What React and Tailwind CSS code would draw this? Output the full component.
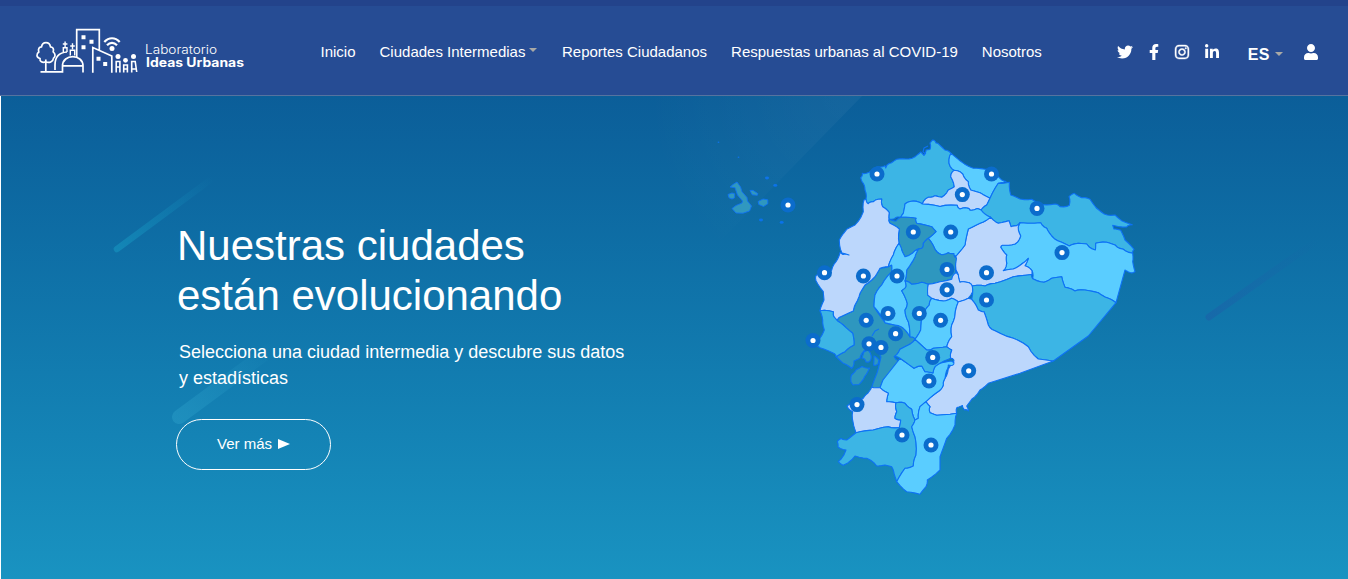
import React from "react";
import { FaTwitter, FaFacebookF, FaInstagram, FaLinkedinIn, FaUser } from "react-icons/fa";

const LIGHT = "#bcd7fc";
const SKY = "#5acdff";
const MID = "#3cb5e5";
const DARK = "#2e97bf";

const PROVINCES = [
  { name: "Guayas", fill: DARK, pts: "891.7,265 880,268.3 875,276.7 865,285 860,293.3 855,305 853.3,311 840.7,316.7 837.3,320.7 843.3,325 852.7,333.3 854,345 845,351.7 836,356.7 843.3,363.3 851.7,368.3 854,361 860,358.3 863,352 868,346 874,344 878,351 881,357 877,373 871.7,387.3 880,387.7 883,380 900,361 894.3,356.7 900,349.3 908.3,345 915,339.3 910,336.7 903.3,328.3 895,325 885,322.7 874,306.7 875,295 881.7,285 891.7,271.7" },
  { name: "Esmeraldas", fill: MID, pts: "860.7,177.7 862.3,173.3 869.3,172.3 877,167 885,165.7 885.7,168 887,165 891,163 896.7,159.3 906,159 915,156.7 920.7,152 924,155.5 926,150 929.8,149.5 930,143 932.7,140 936,143 940,145.3 945,150 951,153.3 949,163.3 954,170.3 950.7,176.7 954.3,186.7 948.3,190 941.7,197.3 935,195.7 928.3,197.3 922.3,204 913.3,201 905,204 903.3,213.3 901,217.3 896,217.5 889,219.3 889.3,212.7 882.7,206.7 881.7,199 873.3,201.7 868.3,203.7 866,199.3 865,190 863.3,183.3" },
  { name: "Carchi", fill: SKY, pts: "951,153.3 960,160.7 973.3,168.3 985,169.3 991,170 1000,178.3 1006,181.6 998.3,183.3 990,198.3 980,192.7 970.7,190 968.3,181.7 962.7,174 954,170.3 949,163.3" },
  { name: "Imbabura", fill: LIGHT, pts: "954,170.3 962.7,174 968.3,181.7 970.7,190 980,192.7 990,198.3 986.7,205 981,210 976.7,208.7 970,210.3 966.7,208 960,209 957.3,205.3 940,206.5 922.3,204 928.3,197.3 935,195.7 941.7,197.3 948.3,190 954.3,186.7 950.7,176.7" },
  { name: "Sucumbios", fill: MID, pts: "981,210 986.7,205 990,198.3 998.3,183.3 1009.3,182.3 1010.7,195 1020,199 1031.7,199.3 1043.3,204.7 1055,204 1060,206.7 1069.3,205.3 1069,196.7 1074.3,193.3 1081.7,197.7 1090,199.3 1096.7,208.3 1104.3,214 1115,215 1121.7,220.7 1132.3,224.7 1126.7,227 1112.7,225.3 1114,229 1120.7,230.3 1125,240 1134,249.3 1132.7,253.3 1123.3,249.3 1115,245 1106.7,242.3 1095.7,243.3 1095.3,250 1086.7,244 1078.3,243.3 1069.3,246 1061.7,242.3 1051.7,236 1046.7,228.3 1040.7,222.7 1020,222.7 1016.7,225.7 1011,226.7 1009,220.7 998.3,223.3 990.7,217.3 988,216" },
  { name: "Orellana", fill: SKY, pts: "1020,222.7 1040.7,222.7 1046.7,228.3 1051.7,236 1061.7,242.3 1069.3,246 1078.3,243.3 1086.7,244 1095.3,250 1095.7,243.3 1106.7,242.3 1115,245 1123.3,249.3 1132.7,253.3 1132.7,261.7 1135,271.7 1130,272.5 1125,270 1116,302.7 1108.3,298.3 1098.3,292.7 1085,290 1075,291 1065,287.3 1061.7,276.7 1051.7,278.3 1044,282.3 1032.7,278.7 1032,270.7 1025,265.7 1028.3,258.3 1022.7,263.3 1013.3,269 1003.3,270.7 1006.7,263.3 1006.7,255 1000.7,247.3 1004.3,245.3 1015,244 1020.7,236 1018.3,228.3" },
  { name: "Napo", fill: LIGHT, pts: "990.7,217.3 998.3,223.3 1009,220.7 1011,226.7 1016.7,225.7 1020,222.7 1018.3,228.3 1020.7,236 1015,244 1004.3,245.3 1000.7,247.3 1006.7,255 1006.7,263.3 1003.3,270.7 1013.3,269 1022.7,263.3 1028.3,258.3 1025,265.7 1032,270.7 1032,274.5 1013.3,276.7 995,283.3 985,286 972.3,286 966.7,282.3 960,282.3 958.3,275 956,270 956,256 965,245 968.3,229 980,223.3" },
  { name: "Pichincha", fill: SKY, pts: "905,204 913.3,201 922.3,204 940,206.5 957.3,205.3 960,209 966.7,208 970,210.3 976.7,208.7 981,210 988,216 990.7,217.3 980,223.3 968.3,229 965,245 956,256 948.3,252.7 941.7,254.7 935,249.3 928.3,238.3 936,231.7 931.7,226.7 916.7,223.3 916,218.3 901,217.3 903.3,213.3" },
  { name: "Santo Domingo", fill: DARK, pts: "901,217.3 916,218.3 916.7,223.3 931.7,226.7 936,231.7 928.3,238.3 923.3,243.3 921.7,248.3 915,250.7 905,256.7 901.7,250 899,243.3 899.3,229 890,223.3 889,219.3 896,221" },
  { name: "Cotopaxi", fill: DARK, pts: "928.3,238.3 935,249.3 941.7,254.7 948.3,252.7 954,253.5 956.5,258 956,275 951.7,279.3 940,281.7 928.3,284.3 921.7,282.3 911.7,284.3 905,280.7 906.7,270 915,256.7 918.3,249.3 921.7,248.3 923.3,243.3" },
  { name: "Manabi", fill: LIGHT, pts: "864,200 866,199.3 868.3,203.7 873.3,201.7 881.7,199 882.7,206.7 889.3,212.7 889,219.3 890,223.3 899.3,229 899,243.3 893.3,255 888.3,266.7 880,268.3 875,276.7 865,285 860,293.3 855,305 853.3,311 840.7,316.7 837.3,320.7 835,318 833.3,311.7 820,310.7 824,300 823.3,291.7 816,280.7 816.7,275 831.7,270 836,261.7 840,252.5 843,254.5 849,255 842,253 839.3,240 846.7,229.3 855,225 863.3,211.7" },
  { name: "Los Rios", fill: SKY, pts: "899,243.3 901.7,250 905,256.7 915,250.7 918.3,249.3 915,256.7 906.7,270 905,280.7 906,286.7 901.7,290.7 907.3,303.3 905,310 908.3,321.7 910,336.7 903.3,328.3 895,325 885,322.7 879.3,313.3 874,306.7 875,295 881.7,285 891.7,271.7 891.7,265 888.3,266.7 893.3,255" },
  { name: "Santa Elena", fill: MID, pts: "820,310.7 833.3,311.7 835,318 837.3,320.7 843.3,325 852.7,333.3 854,345 845,351.7 836,356.7 833,353 820,347.7 811,340 820,338 824.3,330 822.7,320" },
  { name: "Bolivar", fill: MID, pts: "905,280.7 911.7,284.3 921.7,282.3 928.3,284.3 927.7,295 931.7,298.3 929.3,305 921.7,316.7 920.7,330 915,339.3 910,336.7 908.3,321.7 905,310 907.3,303.3 901.7,290.7 906,286.7" },
  { name: "Tungurahua", fill: LIGHT, pts: "956,272.5 958.3,275 960,282.3 966.7,282.3 972.3,286 972.7,291.7 968.3,298.3 958.3,301.7 951.7,298.3 943.3,301 931.7,298.3 927.7,295 928.3,284.3 940,281.7 951.7,279.3" },
  { name: "Chimborazo", fill: SKY, pts: "931.7,298.3 943.3,301 951.7,298.3 958.3,301.7 955,315 951.7,325 951.7,336.7 946.7,346.7 933.3,348.3 926.7,350 915,339.3 920.7,330 921.7,316.7 929.3,305" },
  { name: "Pastaza", fill: MID, pts: "972.3,286 985,286 995,283.3 1013.3,276.7 1032,274.5 1032.7,278.7 1044,282.3 1051.7,278.3 1061.7,276.7 1065,287.3 1075,291 1085,290 1098.3,292.7 1108.3,298.3 1116,302.7 1088.3,336 1053.3,361 1038.3,359 1028.3,346.7 1013.3,338.3 995,330.7 988.3,325 984,311.7 978.3,310 971.7,299.3" },
  { name: "Morona Santiago", fill: LIGHT, pts: "958.3,301.7 968.3,298.3 971.7,299.3 978.3,310 984,311.7 988.3,325 995,330.7 1013.3,338.3 1028.3,346.7 1038.3,359 1053.3,361 1020,373.3 988.3,383.3 980,390 971.7,399.3 966.7,406 968.5,411 964.5,410 962.5,405.5 957,407.5 956.7,413.3 936.7,415.3 930,412.7 930,406.7 926,401.7 939,391 943.3,385 945,378.3 948.3,369 951,364 954,361 950.7,358.3 951.7,350 946.7,346.7 951.7,336.7 951.7,325 955,315" },
  { name: "Azuay", fill: SKY, pts: "900,358.3 914,368.3 921.7,366 925,371.7 933,373 935,366.7 940,363.3 948,361.5 951.5,361 954,362.7 951,365.5 948.3,365 946.5,371 945,378.3 943.3,385 939,391 926,401.7 920,406.7 918.3,418.3 915,420 911.7,409.3 905,403.3 896,402.7 886.7,401.7 888.3,393.3 880,387.7 883,380" },
  { name: "Canar", fill: MID, pts: "915,339.3 926.7,350 933.3,348.3 946.7,346.7 951.7,350 950.7,358.3 940,363.3 935,366.7 933,373 925,371.7 921.7,366 914,368.3 900,358.3 894.3,356.7 900,349.3 908.3,345" },
  { name: "El Oro", fill: LIGHT, pts: "871.7,387.3 880,387.7 888.3,393.3 886.7,401.7 896,402.7 896.7,411.7 895,418.3 900.7,420 899.3,427.7 888.3,426.7 873.3,430 856,432.7 853.3,423.3 852.7,411.7 847,406 856,401 863.3,398.3 868,393" },
  { name: "Loja", fill: MID, pts: "896,402.7 905,403.3 911.7,409.3 915,420 911.7,426.7 915,436.7 916,455 913.3,466 905,468.3 896.7,481.7 894,473.3 891.7,466.7 885,465 876.7,466 866.7,458.3 855,456 843.3,465.3 838.3,461.7 846,450 838,447 837.3,442 841,438.5 846.7,440 856,432.7 873.3,430 888.3,426.7 899.3,427.7 900.7,420 895,418.3 896.7,411.7" },
  { name: "Zamora", fill: SKY, pts: "926,401.7 930,406.7 930,412.7 936.7,415.3 956.7,413.3 955,425 946.7,438.3 940,456.7 940,470 927.3,480 926,486.7 920,494.3 906.7,491.7 896.7,481.7 905,468.3 913.3,466 916,455 915,436.7 911.7,426.7 915,420 918.3,418.3 920,406.7" },
  { name: "Puna", fill: DARK, pts: "851.5,375 856,370 862,366.5 869.5,368 865,376 859,384.5 853,385 851,382" },
  { name: "Delta norte", fill: DARK, pts: "864,352 868,350 871,355 870,361 866,362 862,358" },
  { name: "Delta sur", fill: DARK, pts: "874,356 879,360 878,364 873.5,365" },
];

const GALAPAGOS = [
  "730,187 733,184.5 737,182 740.5,187 742,191.7 747,197.5 747.5,201 751.5,206 749.5,211 743,213.2 736,213 732,208.5 736,205.5 742,203 742.5,201 737.5,195 735,187.7",
  "728,194.5 732,193 734.6,193.7 734.6,197.8 732,199 729,197.8",
  "750,190.4 753,190.4 757.8,193.6 757.3,195.3 752.2,194.8",
  "758.2,201.5 763,199 767.8,199.8 767.8,203.8 763.5,206.5 758.700,204.4",
];

const ISLETS = [
  [718.5, 142.3], [738.5, 157.3], [767, 178], [775.3, 185.4], [761, 220], [781.7, 222.4],
];

const MARKERS = [
  [877, 174], [991.5, 174], [962.3, 194.6], [1037, 208.4], [788, 205], [913.3, 232], [950.7, 232],
  [1062, 252.6], [824.5, 272.7], [863.4, 276], [897, 276], [947, 269.4], [986.5, 272.7], [947, 289.8],
  [986.5, 300], [888, 313.4], [919.3, 313.4], [866.2, 320.3], [940.6, 320.3], [895.6, 333.7],
  [813, 340.5], [869, 343.8], [881, 347.4], [932.7, 357.4], [968.7, 370.8], [929, 381],
  [857, 404.6], [902, 435], [931, 445],
];

// Bends every edge a little; the bend depends only on the edge, so neighbours stay joined.
function rugged(pts) {
  const p = pts.split(" ").map((s) => s.split(",").map(Number));
  let d = `M${p[0][0]} ${p[0][1]}`;
  p.forEach((a, i) => {
    const b = p[(i + 1) % p.length];
    const len = Math.hypot(b[0] - a[0], b[1] - a[1]);
    if (len > 4 && len < 22) {
      [0.33, 0.67].forEach((t) => {
        const x = a[0] + (b[0] - a[0]) * t;
        const y = a[1] + (b[1] - a[1]) * t;
        const h = Math.sin((a[0] + b[0]) * 12.9 + (a[1] + b[1]) * 7.3);
        const g = Math.cos((a[0] + b[0]) * 5.1 + (a[1] + b[1]) * 3.7);
        d += `L${(x + h * 0.7).toFixed(1)} ${(y + g * 0.7).toFixed(1)}`;
      });
    }
    d += `L${b[0]} ${b[1]}`;
  });
  return d + "Z";
}

function EcuadorMap() {
  return (
    <svg className="block h-[483px] w-[460px] shrink-0" viewBox="700 96 460 483">
      <g stroke="#0d72f6" strokeWidth="1.1" strokeLinejoin="round">
        {PROVINCES.map((p) => (
          <path key={p.name} d={rugged(p.pts)} fill={p.fill} />
        ))}
        {GALAPAGOS.map((pts) => (
          <polygon key={pts} points={pts} fill={DARK} strokeWidth="0.9" />
        ))}
        <path d="M928 146l-4 2-1 4 3 2M872 336l3-5 4-2M871 337l-1 5" fill="none" />
      </g>
      {ISLETS.map(([x, y], i) => (
        <ellipse key={i} cx={x} cy={y} rx={i < 2 ? 0.9 : 2} ry={i < 2 ? 0.7 : 1.4} fill="#0a72ea" />
      ))}
      {MARKERS.map(([x, y]) => (
        <g key={`${x}-${y}`}>
          <circle cx={x} cy={y} r="7.5" fill="#0b6ccc" />
          <circle cx={x} cy={y} r="2.6" fill="#fff" />
        </g>
      ))}
    </svg>
  );
}

function Backdrop() {
  return (
    <svg className="pointer-events-none absolute inset-0 h-full w-full" viewBox="1 96 1347 483">
      <defs>
        <linearGradient id="beamA" gradientUnits="userSpaceOnUse" x1="117" y1="249" x2="213" y2="178">
          <stop offset="0" stopColor="#1590bd" stopOpacity="0.7" />
          <stop offset="1" stopColor="#1590bd" stopOpacity="0" />
        </linearGradient>
        <linearGradient id="beamB" gradientUnits="userSpaceOnUse" x1="178" y1="418" x2="275" y2="345">
          <stop offset="0" stopColor="#2b9fc9" stopOpacity="0.45" />
          <stop offset="1" stopColor="#2b9fc9" stopOpacity="0" />
        </linearGradient>
        <linearGradient id="beamC" gradientUnits="userSpaceOnUse" x1="1208" y1="318" x2="1318" y2="240">
          <stop offset="0" stopColor="#1c5fa8" stopOpacity="0.55" />
          <stop offset="1" stopColor="#1c5fa8" stopOpacity="0" />
        </linearGradient>
        <radialGradient id="beamD" gradientUnits="userSpaceOnUse" cx="850" cy="96" r="205">
          <stop offset="0" stopColor="#fff" stopOpacity="0.04" />
          <stop offset="1" stopColor="#fff" stopOpacity="0" />
        </radialGradient>
      </defs>
      <polygon points="862,96 700,262 600,262 600,96" fill="url(#beamD)" />
      <path d="M117 249L213 178" stroke="url(#beamA)" strokeWidth="6.5" strokeLinecap="round" />
      <path d="M179 417L282 341" stroke="url(#beamB)" strokeWidth="14" strokeLinecap="round" />
      <path d="M1209 317L1318 240" stroke="url(#beamC)" strokeWidth="7" strokeLinecap="round" />
    </svg>
  );
}

function Logo() {
  return (
    <svg className="block h-[50px] w-[212px]" viewBox="34 26 212 50">
      <g fill="none" stroke="#fff" strokeWidth="1.7">
        <path d="M45.8 71.5V59.5M45.8 61.8c-3.500 1.500-6.300-.3-5.800-3.300-3.700-1-4-4.500-1.200-6.500-1-3.200.5-5 2.700-5.200 1-5.500 8-5.500 9 0 2.700.3 3.500 2.300 2.700 5 2.500 2 2.300 5.300.3 6.500-.3 3.500-4.500 5-7.700 3.500" />
        <path d="M40.5 71.800H62.500V66c0-12.500 20.500-12.500 20.500 0V72.500M62.500 65.800H83M55 70V65c0-8 4-12.500 12-13" />
        <path d="M62.8 44h4.600M65.100 41.500v6M63.300 52v-4.200h3.700V52M70.200 46h4.600M72.500 43.300v6M70.300 55.500v-5.200h4.400v5.200" strokeWidth="1.4" />
        <path d="M76.7 57V29.700H99.300V50M92.800 72.800V47.500L111.800 56V72.800" />
      </g>
      <g fill="#fff">
        <path d="M81.5 35.200h4v4h-4zM89.500 39.700h4v4h-4zM81.500 45.200h4v4h-4zM96.500 56.800h4v4h-4zM103.200 62h4v4h-4z" />
        <circle cx="112" cy="48.600" r="2.5" />
        <circle cx="118" cy="56.600" r="2.5" />
        <circle cx="125.5" cy="60.300" r="2.4" />
        <circle cx="133.5" cy="56.600" r="2.5" />
      </g>
      <g fill="none" stroke="#fff" strokeWidth="2.2">
        <path d="M104.3 42c4.500-5 10.900-5 15.400 0M107 45.200c3-3.200 7-3.200 10 0" />
        <path d="M116.2 72.600V61.500h3.700V72.600M123.700 72.600V65h3.700V72.600M131.700 72.600V61.500h3.500l1.500 10.500M116.200 67h3.700M123.700 69h3.700M131.700 69h4" strokeWidth="1.6" />
      </g>
      <text x="145" y="53.7" textLength="72" lengthAdjust="spacingAndGlyphs" fill="#fff" className="font-['Inter'] text-[12.5px] font-light">Laboratorio</text>
      <text x="146" y="67.3" textLength="98" lengthAdjust="spacingAndGlyphs" fill="#fff" className="font-['Inter'] text-[12.5px] font-bold">Ideas Urbanas</text>
    </svg>
  );
}

function Caret() {
  return <span className="inline-block border-x-[4.5px] border-t-[4.5px] border-x-transparent border-t-[#a9a9a5]" />;
}

export default function App() {
  return (
    <div className="h-[579px] w-[1348px] overflow-hidden font-['Liberation_Sans',Arial,sans-serif] text-white">
      <header className="flex h-24 items-start border-t-[6px] border-b border-t-[#23438b] border-b-[#56739f] bg-[#264c94] pl-[34px]">
        <div className="mt-5">
          <Logo />
        </div>
        <nav className="mt-[34px] ml-[74.5px] flex gap-6 text-[15px] leading-6 whitespace-nowrap">
          <a>Inicio</a>
          <a className="flex gap-1">
            Ciudades Intermedias
            <span className="-mt-[2px] flex h-6 items-center"><Caret /></span>
          </a>
          <a className="pl-[0.5px]">Reportes Ciudadanos</a>
          <a>Respuestas urbanas al COVID-19</a>
          <a>Nosotros</a>
        </nav>
        <div className="mt-[38px] mr-[29px] ml-auto flex items-start">
          <div className="flex gap-[13px]">
            <FaTwitter size={16} />
            <FaFacebookF size={16} className="-mr-px" />
            <FaInstagram size={16} stroke="currentColor" strokeWidth={14} />
            <FaLinkedinIn size={16} className="ml-px" />
          </div>
          <div className="ml-7 flex items-center gap-[5px] pt-[1px] text-[16px] leading-5 font-bold tracking-[0.5px]">
            ES
            <span className="-mt-[3px] flex"><Caret /></span>
          </div>
          <FaUser size={16} className="ml-5" />
        </div>
      </header>
      <main className="relative flex h-[483px] border-l border-white bg-linear-to-b from-[#0b5e99] to-[#1993c1]">
        <Backdrop />
        <section className="relative w-[699px] pt-[125px] pl-[175px]">
          <h1 className="pl-px text-[42px] leading-[50.4px] font-normal">
            Nuestras ciudades
            <br />
            están evolucionando
          </h1>
          <p className="mt-[17px] ml-[3px] text-[18px] leading-[26px]">
            Selecciona una ciudad intermedia y descubre sus datos
            <br />
            y estadísticas
          </p>
          <button className="mt-7 flex h-[51px] w-[155px] items-center justify-center gap-[6px] rounded-full border border-white text-[15px]">
            Ver más
            <svg width="12" height="10" viewBox="0 0 12 10"><path d="M0 0L12 5L0 10Z" fill="#fff" /></svg>
          </button>
        </section>
        <EcuadorMap />
      </main>
    </div>
  );
}
